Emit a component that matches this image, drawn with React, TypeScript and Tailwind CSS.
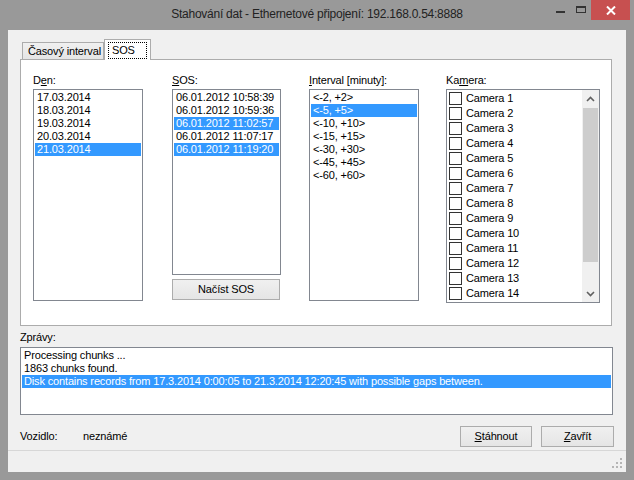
import React from "react";

const days = ["17.03.2014", "18.03.2014", "19.03.2014", "20.03.2014", "21.03.2014"];
const sos = [
  "06.01.2012 10:58:39",
  "06.01.2012 10:59:36",
  "06.01.2012 11:02:57",
  "06.01.2012 11:07:17",
  "06.01.2012 11:19:20",
];
const intervals = ["<-2, +2>", "<-5, +5>", "<-10, +10>", "<-15, +15>", "<-30, +30>", "<-45, +45>", "<-60, +60>"];
const cameras = Array.from({ length: 14 }, (_, i) => `Camera ${i + 1}`);
const messages = [
  "Processing chunks ...",
  "1863 chunks found.",
  "Disk contains records from 17.3.2014 0:00:05 to 21.3.2014 12:20:45 with possible gaps between.",
];

function ListBox({
  items,
  selected,
  className,
}: {
  items: string[];
  selected: number[];
  className: string;
}) {
  return (
    <div className={`border border-[#828790] bg-white p-px ${className}`}>
      {items.map((t, i) => (
        <div
          key={t}
          className={`h-[13px] whitespace-nowrap pl-[2px] leading-[13px] ${
            selected.includes(i) ? "bg-[#3399ff] text-white" : "text-black"
          }`}
        >
          {t}
        </div>
      ))}
    </div>
  );
}

function Label({ pre, u, post }: { pre: string; u: string; post: string }) {
  return (
    <div className="h-[13px] whitespace-nowrap leading-[13px] text-black">
      {pre}
      <span className="underline underline-offset-[1px]">{u}</span>
      {post}
    </div>
  );
}

function Chevron({ up }: { up?: boolean }) {
  return (
    <svg width="9" height="6" viewBox="0 0 9 6">
      <path
        d={up ? "M1 5 L4.5 1.5 L8 5" : "M1 1 L4.5 4.5 L8 1"}
        fill="none"
        stroke="#606060"
        strokeWidth="1.6"
      />
    </svg>
  );
}

export default function App() {
  return (
    <div className="flex h-[480px] w-[634px] flex-col bg-[#999999] font-['Liberation_Sans',Arial,sans-serif] text-[11px] tracking-[-0.15px]">
      {/* title bar */}
      <div className="grid h-[30px] shrink-0 grid-cols-[1fr_auto_1fr]">
        <div />
        <div className="whitespace-nowrap pt-[6px] text-[12px] leading-[16px] tracking-[-0.25px] text-[#222]">
          Stahování dat - Ethernetové připojení: 192.168.0.54:8888
        </div>
        <div className="flex items-start justify-end pr-[4px]">
          <div className="mt-[11px] h-[2px] w-[9px] bg-[#333]" />
          <div className="ml-[11px] mt-[6px] h-[7px] w-[10px] border border-t-2 border-[#333]" />
          <div className="ml-[5px] flex h-[20px] w-[39px] items-center justify-center bg-[#c75050]">
            <svg width="10" height="9" viewBox="0 0 10 9">
              <path d="M1 0.5 L9 8.5 M9 0.5 L1 8.5" stroke="#fff" strokeWidth="2" />
            </svg>
          </div>
        </div>
      </div>

      {/* client area */}
      <div className="mx-[8px] flex flex-1 flex-col bg-[#f0f0f0]">
        <div className="pl-[12px] pt-[9px]">
          {/* tabs */}
          <div className="relative z-10 flex h-[21px] items-end pl-[2px]">
            <div className="mb-px h-[17px] w-[82px] whitespace-nowrap border border-b-0 border-[#acacac] bg-linear-to-b from-[#f0f0f0] to-[#e5e5e5] pl-[5px] pt-[2px] leading-[13px] text-black">
              Časový interval
            </div>
            <div className="h-[21px] w-[47px] border border-b-0 border-[#acacac] bg-white px-[3px] pt-[2px]">
              <div className="h-[17px] w-[39px] border border-dotted border-black pl-[3px] pt-px leading-[13px] text-black">
                SOS
              </div>
            </div>
          </div>

          {/* tab page */}
          <div className="-mt-px flex h-[267px] w-[592px] items-start border border-[#acacac] bg-white pl-[12px] pt-[14px]">
            <div className="flex w-[110px] flex-col">
              <Label pre="D" u="e" post="n:" />
              <ListBox items={days} selected={[4]} className="mt-[2px] h-[212px] w-[110px]" />
            </div>
            <div className="ml-[29px] flex w-[109px] flex-col">
              <Label pre="" u="S" post="OS:" />
              <ListBox items={sos} selected={[2, 4]} className="mt-[2px] h-[186px] w-[109px]" />
              <div className="mt-[4px] h-[21px] w-[108px] border border-[#acacac] bg-linear-to-b from-[#f0f0f0] to-[#e5e5e5] text-center leading-[19px] text-black">
                Načíst SOS
              </div>
            </div>
            <div className="ml-[28px] flex w-[110px] flex-col">
              <Label pre="" u="I" post="nterval [minuty]:" />
              <ListBox items={intervals} selected={[1]} className="mt-[2px] h-[212px] w-[110px]" />
            </div>
            <div className="ml-[27px] flex w-[154px] flex-col">
              <Label pre="Ka" u="m" post="era:" />
              <div className="mt-[2px] flex h-[214px] w-[154px] border border-[#828790] bg-white">
                <div className="flex-1 pl-px pt-px">
                  {cameras.map((c) => (
                    <div key={c} className="flex h-[15px] items-center gap-[4px] pl-px">
                      <span className="h-[13px] w-[13px] border border-[#333] bg-white" />
                      <span className="leading-[13px] text-black">{c}</span>
                    </div>
                  ))}
                </div>
                <div className="flex w-[17px] flex-col bg-[#f0f0f0]">
                  <div className="flex h-[17px] items-center justify-center">
                    <Chevron up />
                  </div>
                  <div className="flex-1 px-px pt-px">
                    <div className="h-[154px] bg-[#cdcdcd]" />
                  </div>
                  <div className="flex h-[17px] items-center justify-center">
                    <Chevron />
                  </div>
                </div>
              </div>
            </div>
          </div>

          {/* messages */}
          <div className="mt-[5px]">
            <Label pre="Zprávy:" u="" post="" />
          </div>
          <ListBox items={messages} selected={[2]} className="mt-[3px] h-[68px] w-[593px]" />

          {/* bottom row */}
          <div className="mt-[11px] flex h-[21px] w-[594px] items-center text-black">
            <span className="w-[63px]">Vozidlo:</span>
            <span>neznámé</span>
            <div className="ml-auto h-[21px] w-[72px] border border-[#acacac] bg-linear-to-b from-[#f0f0f0] to-[#e5e5e5] text-center leading-[19px]">
              <span className="underline underline-offset-[1px]">S</span>táhnout
            </div>
            <div className="ml-[9px] h-[21px] w-[73px] border border-[#acacac] bg-linear-to-b from-[#f0f0f0] to-[#e5e5e5] text-center leading-[19px]">
              <span className="underline underline-offset-[1px]">Z</span>avřít
            </div>
          </div>
        </div>

        {/* status strip */}
        <div className="mt-[3px] flex h-[22px] items-end justify-end border-t border-[#d7d7d7] pb-[3px] pr-[3px]">
          <svg width="12" height="12" viewBox="0 0 12 12">
            <g fill="#b5b5b5">
              <rect x="9" y="1" width="2" height="2" />
              <rect x="5" y="5" width="2" height="2" />
              <rect x="9" y="5" width="2" height="2" />
              <rect x="1" y="9" width="2" height="2" />
              <rect x="5" y="9" width="2" height="2" />
              <rect x="9" y="9" width="2" height="2" />
            </g>
          </svg>
        </div>
      </div>
      <div className="h-[8px] shrink-0" />
    </div>
  );
}
